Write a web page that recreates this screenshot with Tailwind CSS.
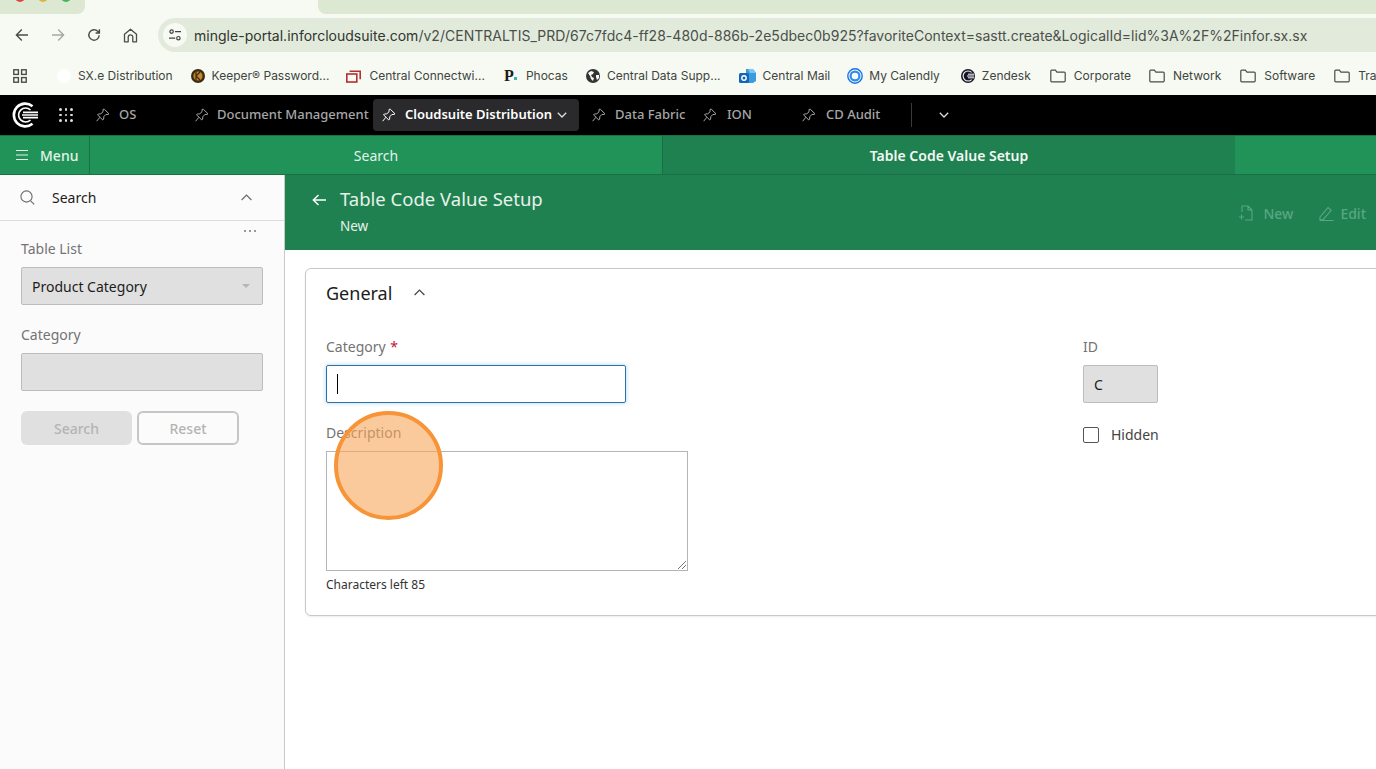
<!DOCTYPE html>
<html lang="en">
<head>
<meta charset="UTF-8">
<title>Table Code Value Setup</title>
<script src="https://cdn.jsdelivr.net/npm/@tailwindcss/browser@4"></script>
</head>
<body class="relative h-[769px] w-[1376px] overflow-hidden bg-white font-['Noto_Sans',sans-serif]">

<svg class="hidden">
  <symbol id="pin" viewBox="0 0 14 14" fill="none" stroke="currentColor" stroke-width="1" stroke-linejoin="round" stroke-linecap="round">
    <path d="M8.3 1.2l4.4 4.3-1 .6-2.2.1-2 2.2-.2 2.6-.9.7-2.5-2.7-2.7-2.4.8-.9 2.5-.2 2.2-2 .1-2.1z" transform="translate(.3 .3)"/>
    <path d="M3.6 9.6L.9 12.9"/>
  </symbol>
  <symbol id="folder" viewBox="0 0 16 14" fill="none" stroke="currentColor" stroke-width="1.2">
    <path d="M.8 2.2c0-.6.4-1 1-1h3.6l1.5 1.9h7.3c.6 0 1 .4 1 1v7.7c0 .6-.4 1-1 1H1.8c-.6 0-1-.4-1-1z"/>
  </symbol>
</svg>

<!-- Browser tab strip -->
<div class="flex h-[14px] bg-[#f6faf2]">
  <div class="relative h-full w-[85px] overflow-hidden rounded-br-lg bg-[#dce8d2]">
    <div class="absolute left-[15px] top-[-8px] h-[10px] w-[10px] rounded-full bg-[#e0443e]"></div>
    <div class="absolute left-[38px] top-[-8px] h-[10px] w-[10px] rounded-full bg-[#e2b33c]"></div>
    <div class="absolute left-[61px] top-[-8px] h-[10px] w-[10px] rounded-full bg-[#3fb950]"></div>
  </div>
  <div class="w-[233px]"></div>
  <div class="flex-1 rounded-bl-lg bg-[#dce8d2]"></div>
</div>

<!-- Toolbar -->
<div class="flex h-[44px] items-center bg-[#f6faf2] pb-[2px] font-['Inter',sans-serif]">
  <svg class="ml-[15px] h-[14px] w-[14px] text-[#474d47]" viewBox="0 0 14 14" fill="none" stroke="currentColor" stroke-width="1.4"><path d="M13 7H1.5M6.8 1.6L1.4 7l5.4 5.4"/></svg>
  <svg class="ml-[22px] h-[14px] w-[14px] text-[#a3a9a3]" viewBox="0 0 14 14" fill="none" stroke="currentColor" stroke-width="1.4"><path d="M1 7h11.5M7.2 1.6L12.6 7l-5.4 5.4"/></svg>
  <svg class="ml-[22px] h-[14px] w-[14px] text-[#474d47]" viewBox="0 0 14 14" fill="none" stroke="currentColor" stroke-width="1.4"><path d="M12.2 7.2a5.2 5.2 0 1 1-1.5-3.9l1.5 1.5M12.4 1.2v3.8H8.6"/></svg>
  <svg class="ml-[22px] h-[15px] w-[15px] text-[#474d47]" viewBox="0 0 15 15" fill="none" stroke="currentColor" stroke-width="1.3" stroke-linejoin="round"><path d="M1.5 6.3L7.5 1.2l6 5.1v7.5H9.8V9.2a2.3 2.3 0 0 0-4.6 0v4.6H1.5z"/></svg>
  <div class="ml-[20px] flex h-[34px] flex-1 items-center rounded-l-full bg-[#e2eadc] pl-[5px]">
    <div class="flex h-[24px] w-[24px] items-center justify-center rounded-full bg-[#f6faf2]">
      <svg class="h-[14px] w-[14px] text-[#3d433d]" viewBox="0 0 14 14" fill="none" stroke="currentColor" stroke-width="1.2"><circle cx="3.6" cy="3.6" r="1.7"/><path d="M7 3.6h6M1 10.2h6.2"/><circle cx="10.4" cy="10.2" r="1.7"/></svg>
    </div>
    <span class="ml-[7px] whitespace-nowrap text-[14px] tracking-[0.02px] text-[#2f352f]">mingle-portal.inforcloudsuite.com<span class="text-[#4a504a]">/v2/CENTRALTIS_PRD/67c7fdc4-ff28-480d-886b-2e5dbec0b925?favoriteContext=sastt.create&amp;LogicalId=lid%3A%2F%2Finfor.sx.sx</span></span>
  </div>
</div>

<!-- Bookmarks bar -->
<div class="flex h-[37px] items-center whitespace-nowrap bg-[#f6faf2] pb-[1px] font-['Inter',sans-serif] text-[12px] text-[#3f453f]">
  <svg class="ml-[13px] h-[14px] w-[14px] shrink-0 text-[#474d47]" viewBox="0 0 14 14" fill="none" stroke="currentColor" stroke-width="1.4"><rect x=".8" y=".8" width="4.6" height="4.6"/><rect x="8.6" y=".8" width="4.6" height="4.6"/><rect x=".8" y="8.6" width="4.6" height="4.6"/><rect x="8.6" y="8.6" width="4.6" height="4.6"/></svg>
  <div class="ml-[15px] h-[16px] w-[1px] bg-[#c5dfbd]"></div>
  <div class="ml-[15px] h-[14px] w-[14px] shrink-0 rounded-full bg-white"></div>
  <span class="ml-[7px]">SX.e Distribution</span>
  <svg class="ml-[18px] h-[14px] w-[14px] shrink-0" viewBox="0 0 14 14"><circle cx="7" cy="7" r="7" fill="#3d2a12"/><circle cx="7" cy="7" r="4.6" fill="#c08a2c"/><path d="M5 3v8M5 7l4-4M5 7l4 4" stroke="#3d2a12" stroke-width="1.2" fill="none"/></svg>
  <span class="ml-[7px]">Keeper® Password...</span>
  <svg class="ml-[17px] h-[13px] w-[15px] shrink-0" viewBox="0 0 15 13" fill="none" stroke="#b3302f" stroke-width="1.6"><rect x=".8" y="4" width="10" height="8"/><path d="M3.6 1.2h10.6v8"/></svg>
  <span class="ml-[8px]">Central Connectwi...</span>
  <span class="ml-[19px] flex w-[13px] shrink-0 font-['Liberation_Serif',serif] text-[16px] font-bold leading-none text-[#1c1c1c]">P<span class="mt-[9px] h-[3px] w-[3px] shrink-0 bg-[#3fb5a5]"></span></span>
  <span class="ml-[9px]">Phocas</span>
  <svg class="ml-[18px] h-[14px] w-[14px] shrink-0" viewBox="0 0 14 14"><circle cx="7" cy="7" r="7" fill="#333"/><path d="M2 4l3-2 3 1-1 2-2 1 1 2 2 1-1 3-2-2-1-3zM10 6l3 0 0 3-2 2-1-3z" fill="#f6faf2"/></svg>
  <span class="ml-[7px]">Central Data Supp...</span>
  <svg class="ml-[18px] h-[16px] w-[17px] shrink-0" viewBox="0 0 17 16"><path d="M7 1h7l3 4v8l-3 2H7z" fill="#3b9be0"/><path d="M9 1h5l3 4h-6z" fill="#7cc6f2"/><rect x="0" y="5" width="10" height="10" rx="1.5" fill="#1465b8"/><circle cx="5" cy="10" r="2.2" fill="none" stroke="#fff" stroke-width="1.4"/></svg>
  <span class="ml-[7px]">Central Mail</span>
  <svg class="ml-[17px] h-[16px] w-[16px] shrink-0" viewBox="0 0 16 16" fill="none"><circle cx="8" cy="8" r="7.2" stroke="#1a73e8" stroke-width="1.4"/><circle cx="8" cy="8" r="4.4" stroke="#2c8cf4" stroke-width="2.2"/></svg>
  <span class="ml-[6px]">My Calendly</span>
  <svg class="ml-[21px] h-[14px] w-[14px] shrink-0" viewBox="0 0 14 14"><circle cx="7" cy="7" r="7" fill="#17172b"/><path d="M10.6 3.4A5 5 0 1 0 10.6 10.6" fill="none" stroke="#f6faf2" stroke-width="1.1"/><path d="M7 5.2h6M6 7h7M7 8.8h6" stroke="#f6faf2" stroke-width="1"/></svg>
  <span class="ml-[7px]">Zendesk</span>
  <svg class="ml-[19px] h-[14px] w-[16px] shrink-0 text-[#474d47]"><use href="#folder"/></svg>
  <span class="ml-[8px]">Corporate</span>
  <svg class="ml-[18px] h-[14px] w-[16px] shrink-0 text-[#474d47]"><use href="#folder"/></svg>
  <span class="ml-[8px]">Network</span>
  <svg class="ml-[19px] h-[14px] w-[16px] shrink-0 text-[#474d47]"><use href="#folder"/></svg>
  <span class="ml-[8px]">Software</span>
  <svg class="ml-[19px] h-[14px] w-[16px] shrink-0 text-[#474d47]"><use href="#folder"/></svg>
  <span class="ml-[8px]">Training</span>
</div>

<!-- Portal nav -->
<div class="flex h-[40px] items-center whitespace-nowrap bg-black text-[13px] font-medium text-[#a6a6a6]">
  <svg class="ml-[12px] h-[26px] w-[26px] shrink-0" viewBox="0 0 26 26" fill="none" stroke="#fff"><path d="M20.5 4.2A11.4 11.4 0 1 0 20.5 21.8" stroke-width="2.6"/><path d="M18.5 8A7 7 0 1 0 18.5 18" stroke-width="1.6"/><path d="M11 10.4h15M10 13h16M11 15.6h15" stroke-width="1.6"/></svg>
  <div class="ml-[21px] grid h-[14px] w-[14px] shrink-0 grid-cols-3 gap-[3px]">
    <i class="h-[2.5px] w-[2.5px] rounded-full bg-[#ddd]"></i><i class="h-[2.5px] w-[2.5px] rounded-full bg-[#ddd]"></i><i class="h-[2.5px] w-[2.5px] rounded-full bg-[#ddd]"></i>
    <i class="h-[2.5px] w-[2.5px] rounded-full bg-[#ddd]"></i><i class="h-[2.5px] w-[2.5px] rounded-full bg-[#ddd]"></i><i class="h-[2.5px] w-[2.5px] rounded-full bg-[#ddd]"></i>
    <i class="h-[2.5px] w-[2.5px] rounded-full bg-[#ddd]"></i><i class="h-[2.5px] w-[2.5px] rounded-full bg-[#ddd]"></i><i class="h-[2.5px] w-[2.5px] rounded-full bg-[#ddd]"></i>
  </div>
  <svg class="ml-[23px] h-[14px] w-[14px] shrink-0"><use href="#pin"/></svg>
  <span class="ml-[9px] w-[17px]">OS</span>
  <svg class="ml-[59px] h-[14px] w-[14px] shrink-0"><use href="#pin"/></svg>
  <span class="ml-[8px] w-[144px]">Document Management</span>
  <div class="ml-[12px] flex h-[32px] w-[206px] shrink-0 items-center rounded bg-[#2a2a2c] text-white">
    <svg class="ml-[9px] h-[14px] w-[14px] shrink-0"><use href="#pin"/></svg>
    <span class="ml-[9px] w-[140px] font-semibold">Cloudsuite Distribution</span>
    <svg class="ml-[12px] h-[8px] w-[10px] shrink-0" viewBox="0 0 10 8" fill="none" stroke="#ddd" stroke-width="1.3"><path d="M.8 1.8L5 6l4.2-4.2"/></svg>
  </div>
  <svg class="ml-[13px] h-[14px] w-[14px] shrink-0"><use href="#pin"/></svg>
  <span class="ml-[9px] w-[67px]">Data Fabric</span>
  <svg class="ml-[21px] h-[14px] w-[14px] shrink-0"><use href="#pin"/></svg>
  <span class="ml-[10px] w-[21px]">ION</span>
  <svg class="ml-[54px] h-[14px] w-[14px] shrink-0"><use href="#pin"/></svg>
  <span class="ml-[10px] w-[52px]">CD Audit</span>
  <div class="ml-[33px] h-[24px] w-[1px] bg-[#3a3a3a]"></div>
  <svg class="ml-[27px] h-[8px] w-[10px] shrink-0" viewBox="0 0 10 8" fill="none" stroke="#ddd" stroke-width="1.3"><path d="M.8 1.8L5 6l4.2-4.2"/></svg>
</div>

<!-- Module tabs -->
<div class="flex h-[40px] border-y border-[#1b6f45] bg-[#219358] text-[14px] text-[#e4f2ea]">
  <div class="flex w-[90px] items-center border-r border-[#1b6f45] pl-[16px]">
    <svg class="h-[12px] w-[12px] shrink-0" viewBox="0 0 12 12" fill="none" stroke="currentColor" stroke-width="1.2"><path d="M0 1.5h12M0 6h12M0 10.5h12"/></svg>
    <span class="ml-[12px] font-medium">Menu</span>
  </div>
  <div class="flex w-[573px] items-center justify-center border-r border-[#1b6f45]">Search</div>
  <div class="flex w-[572px] items-center justify-center bg-[#1f8150] font-semibold text-[#f2f8f4]">Table Code Value Setup</div>
</div>

<div class="flex h-[594px]">
  <!-- Search panel -->
  <aside class="w-[285px] shrink-0 border-r border-[#c9c9c9] bg-[#fbfbfb]">
    <div class="flex h-[46px] items-center border-b border-[#dcdcdc] pl-[20px]">
      <svg class="h-[15px] w-[15px] shrink-0 text-[#6a6a6a]" viewBox="0 0 15 15" fill="none" stroke="currentColor" stroke-width="1.1"><circle cx="6.5" cy="6.5" r="5.6"/><path d="M10.6 10.8l3.6 3.6"/></svg>
      <span class="ml-[17px] text-[14px] text-[#1c1c1c]">Search</span>
      <svg class="ml-[145px] h-[7px] w-[11px] shrink-0 text-[#666]" viewBox="0 0 11 7" fill="none" stroke="currentColor" stroke-width="1.1"><path d="M.6 6L5.5 1l4.9 5"/></svg>
    </div>
    <div class="flex h-[18px] items-center justify-end gap-[2px] pr-[28px] pt-[1px]">
      <i class="h-[2px] w-[2px] rounded-full bg-[#777]"></i><i class="ml-[1px] h-[2px] w-[2px] rounded-full bg-[#777]"></i><i class="ml-[1px] h-[2px] w-[2px] rounded-full bg-[#777]"></i>
    </div>
    <div class="px-[21px]">
      <label class="block h-[21px] text-[14px] leading-[20px] text-[#737373]">Table List</label>
      <div class="mt-[7px] flex h-[38px] w-[242px] items-center justify-between rounded-[2px] border border-[#bcbcbc] bg-[#e0e0e0] pl-[10px] pr-[12px] text-[14px] text-[#1c1c1c]">
        Product Category
        <span class="h-0 w-0 border-x-[4px] border-t-[4px] border-x-transparent border-t-[#b5b5b5]"></span>
      </div>
      <label class="mt-[20px] block h-[21px] text-[14px] leading-[20px] text-[#737373]">Category</label>
      <div class="mt-[7px] h-[38px] w-[242px] rounded-[2px] border border-[#bcbcbc] bg-[#e0e0e0]"></div>
      <div class="mt-[20px] flex gap-[5px] text-[14px] font-medium text-[#b4b4b4]">
        <button class="flex h-[34px] w-[111px] items-center justify-center rounded-[6px] bg-[#e0e0e0]">Search</button>
        <button class="flex h-[34px] w-[102px] items-center justify-center rounded-[6px] border-2 border-[#c6c6c6]">Reset</button>
      </div>
    </div>
  </aside>

  <main class="min-w-0 flex-1">
    <!-- Page header -->
    <div class="flex h-[75px] justify-between bg-[#1f8150]">
      <div class="flex items-start">
        <svg class="ml-[27px] mt-[19px] h-[12px] w-[14px] shrink-0 text-white" viewBox="0 0 14 12" fill="none" stroke="currentColor" stroke-width="1.4"><path d="M14 6H1.5M6.5 1L1.3 6l5.2 5"/></svg>
        <div class="ml-[14px] mt-[10px] text-[#e6f2eb]">
          <div class="text-[18.5px] leading-[28px]">Table Code Value Setup</div>
          <div class="mt-[3px] text-[13.5px] leading-[20px]">New</div>
        </div>
      </div>
      <div class="mr-[10px] mt-[28px] flex h-[20px] items-center text-[14px] font-medium text-[#5aa681]">
        <svg class="h-[16px] w-[15px] shrink-0" viewBox="0 0 15 16" fill="none" stroke="currentColor" stroke-width="1.1"><path d="M3 7V1h6l4 4v10H6M9 1v4h4M0 12h5M2.5 9.5v5"/></svg>
        <span class="ml-[9px]">New</span>
        <svg class="ml-[26px] h-[15px] w-[15px] shrink-0" viewBox="0 0 15 15" fill="none" stroke="currentColor" stroke-width="1.1"><path d="M1 11l8-9.4 3.2 2.8L4 13.6l-3.2.3zM1 14.6h13.5"/></svg>
        <span class="ml-[6px]">Edit</span>
      </div>
    </div>

    <!-- General card -->
    <section class="ml-[20px] mt-[18px] h-[348px] w-[1200px] rounded-[6px] border border-[#c8c8c8] bg-white pl-[20px] shadow-[0_1px_2px_rgba(0,0,0,0.08)]">
      <div class="mt-[10px] flex items-center">
        <h2 class="text-[18px] leading-[28px] text-[#1c1c1c]">General</h2>
        <svg class="ml-[22px] mb-[2px] h-[7px] w-[11px] shrink-0 text-[#444]" viewBox="0 0 11 7" fill="none" stroke="currentColor" stroke-width="1.2"><path d="M.6 6L5.5 1l4.9 5"/></svg>
      </div>
      <div class="mt-[30px] flex">
        <div class="w-[757px]">
          <label class="block h-[21px] text-[14px] leading-[20px] text-[#737373]">Category <span class="ml-[1px] text-[#c3123e]">*</span></label>
          <div class="mt-[7px] flex h-[38px] w-[300px] items-center rounded-[2px] border border-[#2a72a8] pl-[10px] shadow-[0_0_4px_rgba(70,160,220,0.45)]">
            <div class="h-[20px] w-[1px] bg-black"></div>
          </div>
          <label class="mt-[20px] block h-[21px] text-[14px] leading-[20px] text-[#737373]">Description</label>
          <div class="relative mt-[7px] h-[120px] w-[362px] border border-[#b5b5b5]">
            <svg class="absolute bottom-[1px] right-[1px] h-[8px] w-[8px] text-[#555]" viewBox="0 0 8 8" fill="none" stroke="currentColor" stroke-width="0.8"><path d="M0 8l8-8M4 8l4-4"/></svg>
          </div>
          <p class="mt-[6px] text-[12px] leading-[16px] text-[#333]">Characters left 85</p>
        </div>
        <div>
          <label class="block h-[21px] text-[14px] leading-[20px] text-[#737373]">ID</label>
          <div class="mt-[7px] flex h-[38px] w-[75px] items-center rounded-[2px] border border-[#bcbcbc] bg-[#e0e0e0] pl-[10px] text-[14px] text-[#1c1c1c]">C</div>
          <div class="mt-[22px] flex items-center">
            <span class="h-[16px] w-[16px] rounded-[2px] border border-[#555] bg-white"></span>
            <span class="ml-[12px] text-[14px] leading-[20px] text-[#444]">Hidden</span>
          </div>
        </div>
      </div>
    </section>
  </main>
</div>

<!-- Click highlight -->
<div class="absolute left-[334px] top-[411px] h-[109px] w-[109px] rounded-full border-[4px] border-[#f79438] bg-[#f9a65a]/60"></div>

</body>
</html>
